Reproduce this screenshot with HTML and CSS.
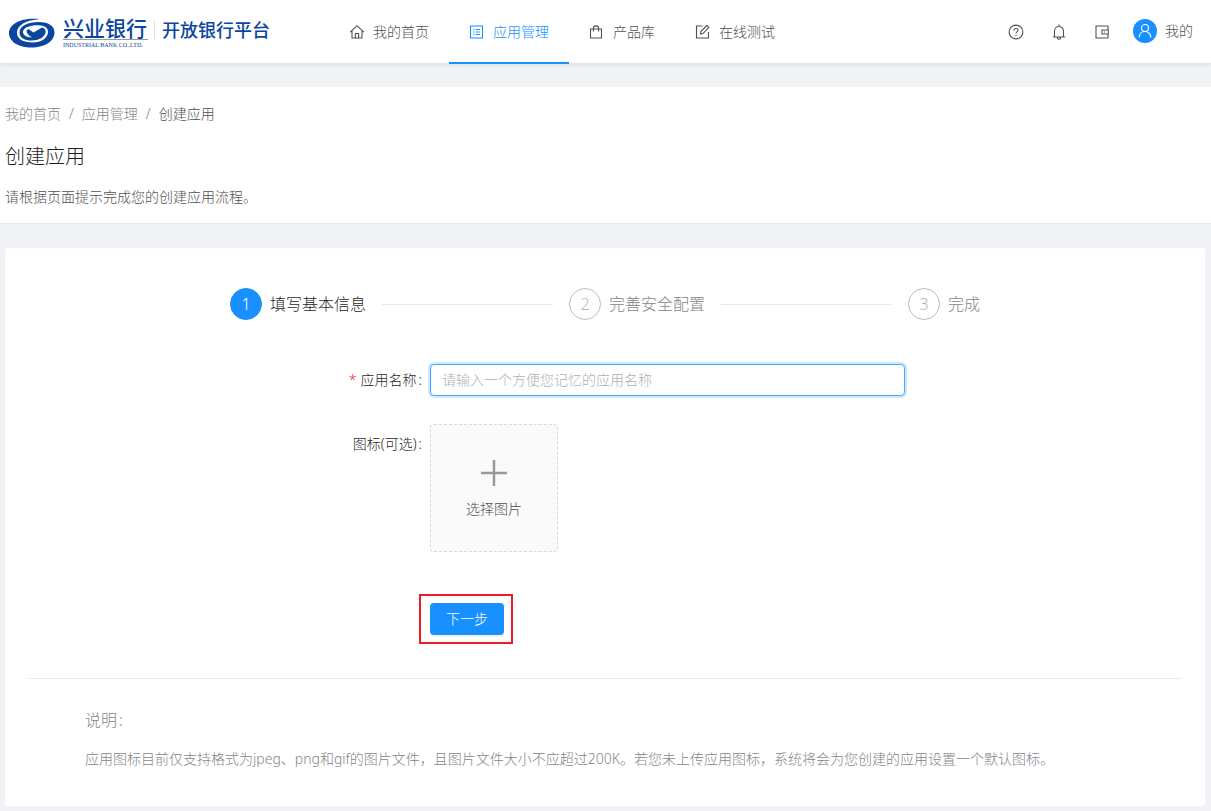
FILE: index.html
```html
<!DOCTYPE html>
<html lang="zh-CN">
<head>
<meta charset="utf-8">
<meta name="viewport" content="width=device-width, initial-scale=1">
<title>创建应用 - 开放银行平台</title>
<link rel="stylesheet" href="styles.css">
</head>
<body>
<header class="topbar">
  <a class="brand" href="#">
    <svg class="brand-mark" viewBox="0 0 46 30" aria-hidden="true">
      <path fill="#0a469f" d="M31 1C12-1 0 6 0 15C0 24 10 29.500 22.500 29.500C36 29.500 45.500 23 45.500 14.500C45.500 8 39 4 30 4C19 4 10.500 8 10.500 14.500C10.500 20 16 22.500 22.500 22.500C30 22.500 35 19.500 36.500 15C37 12 36 10 33 9.500L24.500 14.500L19.500 11L17.500 12.500C17.500 15.500 19.500 17.500 23 19.300C18 19.500 13.800 17.500 14 13.500C14.300 9.500 21.500 7 29.500 7.200C36.500 7.500 39.500 10.500 39 14.500C38 20.500 32.500 24.500 23.500 24.500C13.500 24.500 7.500 20.500 8 14C8.500 7 17 2.300 31 1Z"/>
    </svg>
    <span class="brand-bank">
      <span class="bank-name">兴业银行</span>
      <span class="bank-en">INDUSTRIAL BANK CO.,LTD.</span>
    </span>
    <span class="brand-platform">开放银行平台</span>
  </a>
  <nav class="nav">
    <a class="nav-item" href="#">
      <svg class="icon" viewBox="0 0 16 16" aria-hidden="true"><path d="M1.200 8.200L8 1.700L14.800 8.200M3 7V14H13V7M6.400 14V9.500H9.600V14"/></svg>我的首页</a>
    <a class="nav-item active" href="#" aria-current="page">
      <svg class="icon" viewBox="0 0 16 16" aria-hidden="true"><path d="M1.500 2H13.500V14H1.500ZM4.200 5.500H5.500M4.200 8H5.500M4.200 10.500H5.500M6.700 5.500H10.800M6.700 8H10.800M6.700 10.500H10.800"/></svg>应用管理</a>
    <a class="nav-item" href="#">
      <svg class="icon" viewBox="0 0 16 16" aria-hidden="true"><path d="M1.500 5H12.500V14H1.500ZM4.400 7.400V4.500A2.600 2.600 0 0 1 9.600 4.500V7.400"/></svg>产品库</a>
    <a class="nav-item" href="#">
      <svg class="icon" viewBox="0 0 16 16" aria-hidden="true"><path d="M7.500 2H1.500V14H13.500V8M5.500 10L5.800 7.600L11.800 1.600L13.800 3.600L7.900 9.600Z"/></svg>在线测试</a>
  </nav>
  <div class="tools">
    <button class="tool" type="button" aria-label="帮助"><svg class="icon" viewBox="0 0 16 16" aria-hidden="true"><circle cx="8" cy="8" r="6.900"/><path d="M5.900 6.400C5.900 3.800 10.100 3.800 10.100 6.300C10.100 8 8 7.700 8 9.500M8 10.700V12"/></svg></button>
    <button class="tool" type="button" aria-label="通知"><svg class="icon" viewBox="0 0 16 16" aria-hidden="true"><path d="M1.800 13H14.200M3.500 13V7A4.500 4.500 0 0 1 12.500 7V13M8 2.500V.6M6.300 13.500A1.700 1.700 0 0 0 9.700 13.500"/></svg></button>
    <button class="tool" type="button" aria-label="钱包"><svg class="icon" viewBox="0 0 16 16" aria-hidden="true"><path d="M14 6V2H2V14H14V10M14.300 6H8V10H14.300ZM10 8H11.200"/></svg></button>
    <a class="user" href="#">
      <span class="avatar"><svg class="icon" viewBox="0 0 16 16" aria-hidden="true"><circle cx="8" cy="5" r="3.500"/><path d="M2.200 14.500C2.200 6.500 13.800 6.500 13.800 14.500"/></svg></span>我的</a>
  </div>
</header>

<section class="page-head">
  <nav class="crumbs" aria-label="面包屑">
    <a href="#">我的首页</a><span class="sep">/</span><a href="#">应用管理</a><span class="sep">/</span><span class="current">创建应用</span>
  </nav>
  <h1 class="title">创建应用</h1>
  <p class="lead">请根据页面提示完成您的创建应用流程。</p>
</section>

<main class="card">
  <ol class="steps">
    <li class="step on"><span class="num">1</span><span class="step-name">填写基本信息</span></li>
    <li class="step"><span class="num">2</span><span class="step-name">完善安全配置</span></li>
    <li class="step"><span class="num">3</span><span class="step-name">完成</span></li>
  </ol>
  <form class="form">
    <label class="label" for="app-name"><span class="required">*</span>应用名称<span class="colon">:</span></label>
    <input class="input" id="app-name" type="text" placeholder="请输入一个方便您记忆的应用名称">
    <label class="label label-upload" for="app-icon">图标(可选)<span class="colon">:</span></label>
    <button class="upload" id="app-icon" type="button">
      <svg class="plus" viewBox="0 0 32 32" aria-hidden="true"><path d="M16 3V29M3 16H29"/></svg>
      <span>选择图片</span>
    </button>
    <div class="actions"><button class="primary" type="submit">下一步</button></div>
  </form>
  <hr class="divider">
  <section class="notes">
    <h2 class="notes-title">说明<span class="colon">:</span></h2>
    <p class="notes-text">应用图标目前仅支持格式为jpeg、png和gif的图片文件，且图片文件大小不应超过200K。若您未上传应用图标，系统将会为您创建的应用设置一个默认图标。</p>
  </section>
</main>
</body>
</html>
```
FILE: styles.css
```css
* { box-sizing: border-box; }

body {
  margin: 0;
  background: #f0f2f5;
  color: #505050;
  font-family: "Noto Sans", "Noto Sans CJK SC", sans-serif;
  font-size: 14px;
  font-weight: 300;
  line-height: 22px;
}

a { color: inherit; text-decoration: none; }
button, input { font: inherit; color: inherit; }
h1, h2, p, ol { margin: 0; padding: 0; font-weight: inherit; }

.icon {
  width: 16px;
  height: 16px;
  flex: none;
  fill: none;
  stroke: currentColor;
  stroke-width: 1.1;
}

.topbar {
  display: flex;
  height: 64px;
  padding: 0 18px 0 9px;
  background: #fff;
  border-bottom: 1px solid #e3e7eb;
  box-shadow: 0 1px 4px rgba(0, 21, 41, 0.08);
}

.brand {
  display: flex;
  width: 320px;
  align-items: flex-start;
  padding-top: 18px;
  color: #0a469f;
}
.brand-mark { width: 46px; height: 30px; margin-right: 8px; }
.brand-bank { width: 85px; white-space: nowrap; }
.bank-name {
  display: block;
  height: 22px;
  border-bottom: 1px solid #9a9a9a;
  font-size: 21px;
  font-weight: 500;
  line-height: 21px;
}
.bank-en {
  display: block;
  font-family: "Liberation Serif", serif;
  font-size: 6px;
  font-weight: 400;
  line-height: 10px;
}
.brand-platform {
  margin: 3px 0 0 6px;
  padding-left: 7px;
  border-left: 1px solid #dedede;
  font-size: 18px;
  font-weight: 500;
  line-height: 18px;
}

.nav { display: flex; height: 64px; }
.nav-item {
  display: flex;
  align-items: center;
  gap: 8px;
  padding: 0 20px;
}
.nav-item.active { box-shadow: inset 0 -2px #1890ff; color: #1890ff; }

.tools { display: flex; align-items: center; margin-left: auto; }
.tool {
  display: flex;
  width: 43px;
  padding: 0;
  border: 0;
  background: none;
  justify-content: center;
}
.user { display: flex; align-items: center; gap: 8px; margin: 0 0 2px 10px; }
.avatar {
  display: flex;
  width: 24px;
  height: 24px;
  align-items: center;
  justify-content: center;
  border-radius: 50%;
  background: #1890ff;
  color: #fff;
}

.page-head {
  margin-top: 23px;
  padding: 16px 5px 15px;
  background: #fff;
  border-bottom: 1px solid #e8e8e8;
}
.crumbs { display: flex; color: #858585; }
.sep { margin: 0 8px; }
.crumbs .current { color: #505050; }
.title { margin: 16px 0 13px; color: #1f1f1f; font-size: 20px; line-height: 32px; }

.card {
  margin: 24px 6px 5px 5px;
  padding: 40px 24px 36px;
  border-radius: 2px;
  background: #fff;
}

.steps {
  display: flex;
  max-width: 750px;
  margin: 0 auto;
  list-style: none;
  font-size: 16px;
  line-height: 32px;
  color: #858585;
}
.step { display: flex; flex: 1; align-items: center; }
.step:last-child { flex: none; }
.step:not(:last-child)::after {
  content: "";
  flex: 1;
  height: 1px;
  margin: 0 16px;
  background: #e8e8e8;
}
.num {
  width: 32px;
  height: 32px;
  margin-right: 8px;
  border: 1px solid #bfbfbf;
  border-radius: 50%;
  color: #b5b5b5;
  line-height: 30px;
  text-align: center;
}
.on { color: #1f1f1f; }
.on .num { border-color: #1890ff; background: #1890ff; color: #fff; }

.form {
  display: grid;
  grid-template-columns: 192px minmax(0, 475px);
  max-width: 750px;
  margin: 44px auto 0;
  column-gap: 8px;
  row-gap: 28px;
}
.label {
  justify-self: end;
  color: #1f1f1f;
  line-height: 32px;
}
.label-upload { padding-top: 4px; }
.required { margin-right: 4px; color: #f5222d; }
.colon { margin-left: 2px; }
.input {
  height: 32px;
  padding: 3px 11px 5px;
  border: 1px solid #40a9ff;
  border-radius: 4px;
  outline: 0;
  background: #fff;
  box-shadow: 0 0 0 2px rgba(24, 144, 255, 0.2);
}
.input::placeholder { color: #b0b0b0; opacity: 1; }
.upload {
  display: flex;
  width: 128px;
  height: 128px;
  padding: 0;
  flex-direction: column;
  align-items: center;
  justify-content: center;
  gap: 9px;
  border: 1px dashed #d9d9d9;
  border-radius: 4px;
  background: #fafafa;
}
.plus { width: 32px; height: 32px; fill: none; stroke: #999; stroke-width: 2.5; }
.actions {
  grid-column: 2;
  justify-self: start;
  margin: 14px 0 0 -11px;
  padding: 7px 7px 7px 9px;
  border: 2px solid #ed1c24;
}
.primary {
  display: block;
  height: 32px;
  padding: 0 16px;
  border: 0;
  border-radius: 4px;
  background: #1890ff;
  box-shadow: 0 2px 0 rgba(0, 0, 0, 0.05);
  color: #fff;
}

.divider { height: 1px; margin: 34px 0 0; border: 0; background: #e8e8e8; }
.notes { padding: 29px 56px 0; color: #858585; }
.notes-title { margin-bottom: 16px; font-size: 16px; line-height: 24px; }
```
